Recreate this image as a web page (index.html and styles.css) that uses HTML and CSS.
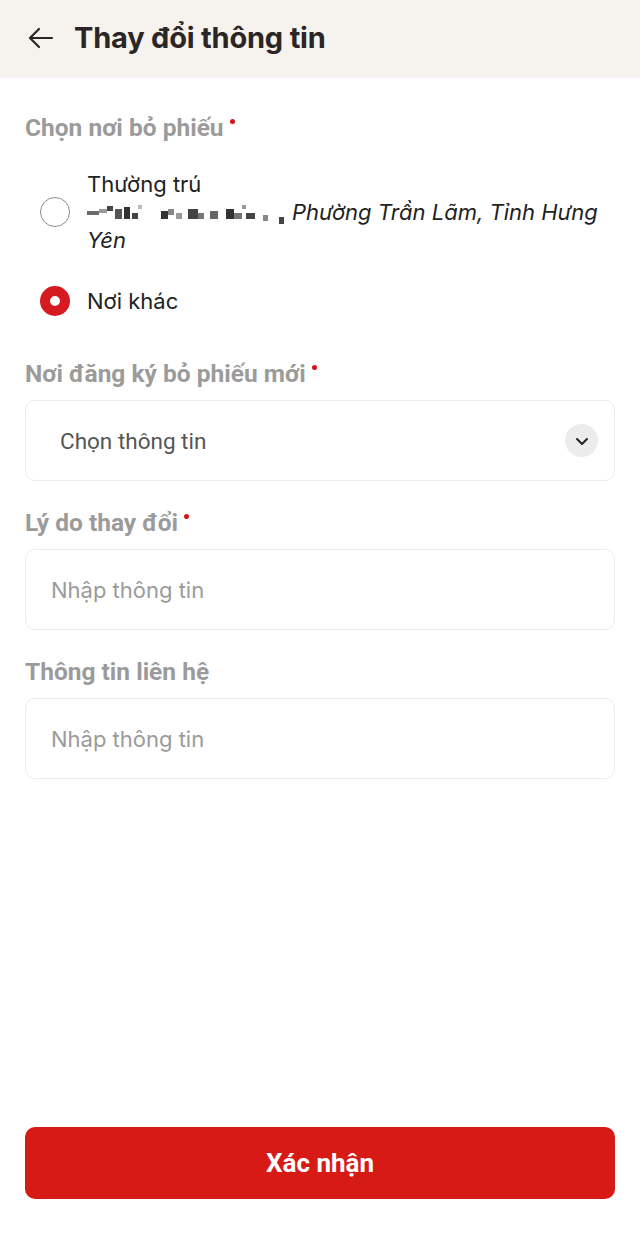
FILE: index.html
```html
<!DOCTYPE html>
<html lang="vi">
<head>
    <meta charset="UTF-8">
    <meta name="viewport" content="width=device-width, initial-scale=1.0">
    <title>Thay đổi thông tin</title>
    <link rel="stylesheet" href="styles.css">
</head>
<body>
    <header class="topbar">
        <button class="back" aria-label="Quay lại">
            <svg width="26" height="22" viewBox="0 0 26 22"><path d="M24 11H3M11 2L2 11l9 9" fill="none" stroke="#2b2625" stroke-width="2.2" stroke-linecap="round" stroke-linejoin="round"/></svg>
        </button>
        <h1>Thay đổi thông tin</h1>
    </header>

    <main class="form">
        <div class="label">Chọn nơi bỏ phiếu <span class="req"></span></div>
        <div class="radios">
            <label class="radio">
                <span class="dot"></span>
                <span class="opt-text">
                    Thường trú<br>
                    <svg class="blur" width="200" height="22" viewBox="0 0 200 22">
                        <rect x="0" y="8" width="12" height="4" fill="#6b6b6b"/>
                        <rect x="12" y="6" width="8" height="4" fill="#9a9a9a"/>
                        <rect x="20" y="3" width="6" height="5" fill="#444"/>
                        <rect x="28" y="6" width="7" height="10" fill="#555"/>
                        <rect x="37" y="4" width="6" height="12" fill="#333"/>
                        <rect x="45" y="10" width="6" height="6" fill="#444"/>
                        <rect x="51" y="2" width="4" height="4" fill="#bbb"/>
                        <rect x="74" y="8" width="7" height="8" fill="#333"/>
                        <rect x="81" y="6" width="6" height="6" fill="#888"/>
                        <rect x="89" y="10" width="6" height="6" fill="#999"/>
                        <rect x="101" y="6" width="10" height="10" fill="#444"/>
                        <rect x="111" y="10" width="6" height="6" fill="#777"/>
                        <rect x="123" y="8" width="8" height="8" fill="#666"/>
                        <rect x="139" y="6" width="8" height="10" fill="#333"/>
                        <rect x="147" y="10" width="8" height="6" fill="#777"/>
                        <rect x="155" y="2" width="4" height="4" fill="#999"/>
                        <rect x="159" y="10" width="9" height="6" fill="#444"/>
                        <rect x="176" y="12" width="5" height="6" fill="#888"/>
                        <rect x="192" y="14" width="5" height="7" fill="#444"/>
                    </svg><em>Phường Trần Lãm, Tỉnh Hưng Yên</em>
                </span>
            </label>
            <label class="radio checked">
                <span class="dot"></span>
                <span class="opt-text">Nơi khác</span>
            </label>
        </div>

        <div class="label after-radios">Nơi đăng ký bỏ phiếu mới <span class="req"></span></div>
        <div class="field select">
            <span>Chọn thông tin</span>
            <span class="chev">
                <svg width="14" height="10" viewBox="0 0 14 10"><path d="M2 3l5 5 5-5" fill="none" stroke="#222" stroke-width="2" stroke-linecap="round" stroke-linejoin="round"/></svg>
            </span>
        </div>

        <div class="label">Lý do thay đổi <span class="req"></span></div>
        <div class="field input">Nhập thông tin</div>

        <div class="label">Thông tin liên hệ</div>
        <div class="field input">Nhập thông tin</div>
    </main>

    <footer class="actions">
        <button class="submit">Xác nhận</button>
    </footer>
</body>
</html>
```

FILE: styles.css
```css
body {
    margin: 0;
    font-family: Roboto, "Noto Sans", sans-serif;
    background: #ffffff;
    color: #222;
    width: 640px;
    height: 1244px;
    display: flex;
    flex-direction: column;
}
.topbar {
    background: #f6f2ee;
    height: 78px;
    display: flex;
    align-items: center;
    padding: 0 28px 3px;
    gap: 20px;
    box-sizing: border-box;
}
.back {
    border: none;
    background: none;
    padding: 0;
    display: flex;
}
.topbar h1 {
    margin: 0;
    font-family: Inter, Roboto, sans-serif;
    font-size: 29px;
    font-weight: 700;
    color: #2b2625;
    letter-spacing: -0.2px;
}
.form {
    padding: 0 25px;
    flex: 1;
}
.label {
    display: flex;
    align-items: flex-start;
    gap: 6px;
    font-size: 24.5px;
    font-weight: 700;
    color: #9b9b9b;
    margin-top: 28px;
    margin-bottom: 12px;
    line-height: 28px;
}
.form > .label:first-child { margin-top: 36px; }
.label.after-radios { margin-top: 44px; }
.req {
    flex: none;
    width: 5px;
    height: 5px;
    border-radius: 50%;
    background: #d0151c;
    margin-top: 5px;
}
.radios {
    display: flex;
    flex-direction: column;
    gap: 32px;
    margin-top: 28px;
}
.radio {
    display: flex;
    align-items: center;
    gap: 17px;
    padding-left: 15px;
}
.dot {
    flex: none;
    width: 30px;
    height: 30px;
    border-radius: 50%;
    border: 1.5px solid #8e8e8e;
    box-sizing: border-box;
}
.radio.checked .dot {
    border: 10px solid #d71a1f;
    background: #fff;
}
.opt-text {
    font-family: Inter, Roboto, sans-serif;
    font-size: 22px;
    line-height: 28px;
    color: #222;
}
.blur {
    vertical-align: -5px;
    margin-right: 5px;
}
.opt-text em { font-style: italic; }
.field {
    height: 81px;
    border: 1.5px solid #ececec;
    border-radius: 10px;
    box-sizing: border-box;
    display: flex;
    align-items: center;
    font-size: 22.5px;
}
.select {
    padding: 0 16px 0 34px;
    justify-content: space-between;
    color: #555;
}
.chev {
    width: 33px;
    height: 33px;
    border-radius: 50%;
    background: #ececec;
    display: flex;
    align-items: center;
    justify-content: center;
}
.input {
    padding-left: 25px;
    color: #9a9a9a;
    font-family: Inter, Roboto, sans-serif;
    font-size: 22px;
}
.actions {
    padding: 0 25px 45px;
}
.submit {
    width: 100%;
    height: 72px;
    border: none;
    border-radius: 10px;
    background: #d71a16;
    color: #fff;
    font-family: Roboto, sans-serif;
    font-size: 26px;
    font-weight: 700;
}
```
